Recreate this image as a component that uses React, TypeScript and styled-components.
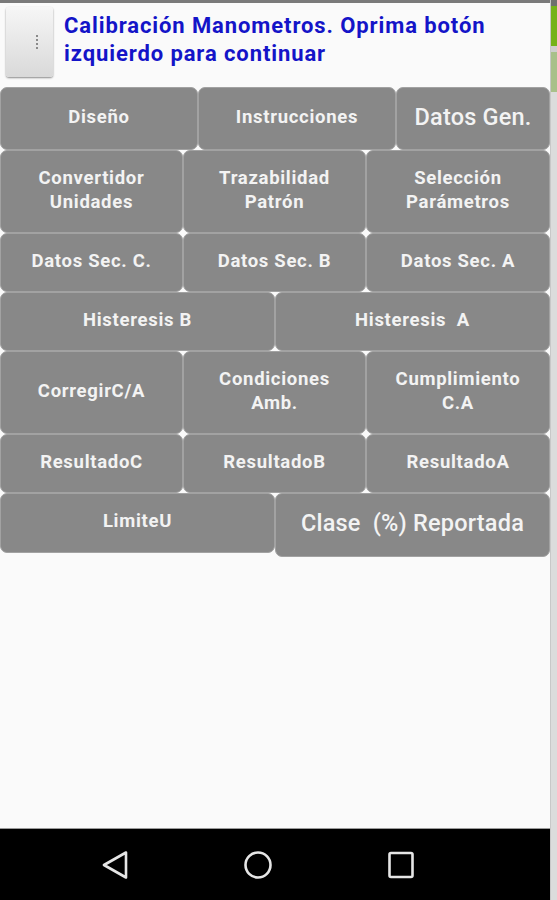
import React from 'react';
import styled, { createGlobalStyle } from 'styled-components';

const GlobalStyle = createGlobalStyle`
  body {
    margin: 0;
    font-family: Roboto, "Liberation Sans", sans-serif;
    background: #fafafa;
  }
`

const Phone = styled.div`
  width: 557px;
  height: 900px;
  display: flex;
  overflow: hidden;
`

const Main = styled.div`
  width: 550px;
  display: flex;
  flex-direction: column;
  background: #fafafa;
`

const EdgeStrip = styled.div`
  width: 7px;
  display: flex;
  flex-direction: column;
  background: #dcdcdc;
  border-left: 1px solid #c8c8c8;
`

const EdgePiece = styled.div<{ $h: number; $c: string }>`
  height: ${p => p.$h}px;
  background: ${p => p.$c};
`

const StatusEdge = styled.div`
  height: 3px;
  background: #7a7a7a;
`

const Header = styled.div`
  display: flex;
  align-items: flex-start;
  gap: 11px;
  padding: 4px 0 0 6px;
  height: 80px;
  box-sizing: border-box;
`

const MenuButton = styled.div`
  width: 47px;
  height: 70px;
  border-radius: 3px;
  background: linear-gradient(#f6f6f6, #d9d9d9);
  box-shadow: 0 1px 2px rgba(0, 0, 0, 0.45);
  display: flex;
  flex-direction: column;
  align-items: center;
  justify-content: center;
  gap: 2px;
  padding-left: 14px;
  box-sizing: border-box;
`

const Dot = styled.span`
  width: 2px;
  height: 2px;
  background: #8a8a8a;
`

const Title = styled.div`
  color: #1414c8;
  font-weight: 700;
  font-size: 22px;
  letter-spacing: 0.9px;
  line-height: 28px;
  padding-top: 5px;
`

const Grid = styled.div`
  display: flex;
  flex-direction: column;
  margin-top: 4px;
`

const Row = styled.div<{ $h: number }>`
  display: flex;
  align-items: flex-start;
  height: ${p => p.$h}px;
`

const Btn = styled.div<{ $w: number; $h?: number; $big?: boolean }>`
  width: ${p => p.$w}px;
  height: ${p => (p.$h ? p.$h + 'px' : '100%')};
  box-sizing: border-box;
  background: #888888;
  border: 1px solid #a2a2a2;
  border-radius: 7px;
  color: #f3f3f3;
  display: flex;
  align-items: center;
  justify-content: center;
  text-align: center;
  white-space: pre;
  font-weight: ${p => (p.$big ? 500 : 700)};
  font-size: ${p => (p.$big ? 23.5 : 18.5)}px;
  letter-spacing: ${p => (p.$big ? 0.2 : 0.7)}px;
  line-height: 24px;
  padding-bottom: 4px;
`

const Spacer = styled.div`
  flex: 1;
`

const NavBar = styled.div`
  height: 71px;
  background: #000;
  display: flex;
  align-items: center;
  gap: 115px;
  padding-left: 101px;
  border-top: 1px solid #9a9a9a;
`

const NavIcon = styled.svg`
  width: 28px;
  height: 28px;
  stroke: #e6e6e6;
  stroke-width: 2.6;
  fill: none;
  stroke-linejoin: round;
`

const rows: { h: number; items: { t: string; w: number; h?: number; big?: boolean }[] }[] = [
  { h: 63, items: [{ t: 'Diseño', w: 198 }, { t: 'Instrucciones', w: 198 }, { t: 'Datos Gen.', w: 154, big: true }] },
  { h: 83, items: [{ t: 'Convertidor\nUnidades', w: 183 }, { t: 'Trazabilidad\nPatrón', w: 183 }, { t: 'Selección\nParámetros', w: 184 }] },
  { h: 59, items: [{ t: 'Datos Sec. C.', w: 183 }, { t: 'Datos Sec. B', w: 183 }, { t: 'Datos Sec. A', w: 184 }] },
  { h: 59, items: [{ t: 'Histeresis B', w: 275 }, { t: 'Histeresis  A', w: 275 }] },
  { h: 83, items: [{ t: 'CorregirC/A', w: 183 }, { t: 'Condiciones\nAmb.', w: 183 }, { t: 'Cumplimiento\nC.A', w: 184 }] },
  { h: 59, items: [{ t: 'ResultadoC', w: 183 }, { t: 'ResultadoB', w: 183 }, { t: 'ResultadoA', w: 184 }] },
  { h: 64, items: [{ t: 'LimiteU', w: 275, h: 60 }, { t: 'Clase  (%) Reportada', w: 275, h: 64, big: true }] },
]

function App() {
  return (
    <Phone>
      <GlobalStyle />
      <Main>
        <StatusEdge />
        <Header>
          <MenuButton>
            <Dot />
            <Dot />
            <Dot />
            <Dot />
          </MenuButton>
          <Title>
            Calibración Manometros. Oprima botón
            <br />
            izquierdo para continuar
          </Title>
        </Header>
        <Grid>
          {rows.map((row, i) => (
            <Row key={i} $h={row.h}>
              {row.items.map(b => (
                <Btn key={b.t} $w={b.w} $h={b.h} $big={b.big}>{b.t}</Btn>
              ))}
            </Row>
          ))}
        </Grid>
        <Spacer />
        <NavBar>
          <NavIcon viewBox="0 0 28 28">
            <path d="M25 1.5 L3 14 L25 26.5 Z" />
          </NavIcon>
          <NavIcon viewBox="0 0 28 28">
            <circle cx="14" cy="14" r="12.5" />
          </NavIcon>
          <NavIcon viewBox="0 0 28 28">
            <rect x="2.5" y="2" width="23" height="24" rx="1.5" />
          </NavIcon>
        </NavBar>
      </Main>
      <EdgeStrip>
        <EdgePiece $h={6} $c="#6f6f6f" />
        <EdgePiece $h={40} $c="#76b21a" />
        <EdgePiece $h={6} $c="#cfcfcf" />
        <EdgePiece $h={40} $c="#a9c08a" />
      </EdgeStrip>
    </Phone>
  )
}

export default App;
